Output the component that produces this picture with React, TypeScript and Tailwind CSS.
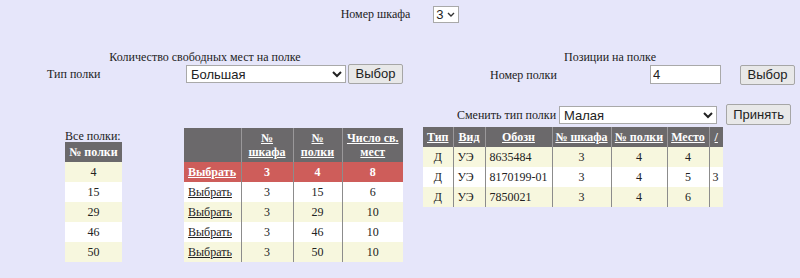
import React from "react";

const sans = { fontFamily: '"Liberation Sans", Arial, sans-serif' };

const freeRows = [
  { shelf: 4, free: 8, selected: true },
  { shelf: 15, free: 6 },
  { shelf: 29, free: 10 },
  { shelf: 46, free: 10 },
  { shelf: 50, free: 10 },
];

const positions = [
  { kind: "Д", type: "УЭ", code: "8635484", place: 4, extra: "" },
  { kind: "Д", type: "УЭ", code: "8170199-01", place: 5, extra: "3" },
  { kind: "Д", type: "УЭ", code: "7850021", place: 6, extra: "" },
];

function Button({ label, className }: { label: string; className: string }) {
  return (
    <button
      style={sans}
      className={`flex items-center justify-center rounded-[2px] border border-[#a6a6a6] bg-[#e8e8e8] text-[13px] text-[#222] ${className}`}
    >
      {label}
    </button>
  );
}

function rowBg(i: number) {
  return i % 2 === 0 ? "bg-[#f7f7de]" : "bg-white";
}

export default function App() {
  return (
    <div className="h-[278px] w-[800px] overflow-hidden bg-[#e6e6fa] font-['Liberation_Serif','Times_New_Roman','DejaVu_Serif',serif] text-[12px] text-[#222]">
      <div className="flex h-[22px] items-center justify-center gap-[23px] pt-[6px]">
        <span className="leading-[14px]">Номер шкафа</span>
        <div className="relative h-[17px] w-[26px]">
          <select
            style={sans}
            className="h-[17px] w-[26px] appearance-none border border-[#a9a9a9] bg-white py-0 pl-[2px] pr-0 text-[13px] leading-none"
            defaultValue="3"
          >
            <option value="3">3</option>
          </select>
          <svg
            className="pointer-events-none absolute right-[4px] top-[6px]"
            width="8"
            height="5"
            viewBox="0 0 8 5"
          >
            <path d="M1 1l3 3 3-3" fill="none" stroke="#333" strokeWidth="1.4" />
          </svg>
        </div>
      </div>

      <div className="mt-[28px] flex">
        {/* left half */}
        <div className="w-[420px]">
          <div className="w-[410px] text-center leading-[14px]">
            Количество свободных мест на полке
          </div>
          <div className="flex h-[20px] items-center">
            <span className="ml-[47px] w-[139px]">Тип полки</span>
            <select
              style={sans}
              className="h-[18px] w-[160px] border border-[#a9a9a9] bg-white text-[13px] leading-none"
              defaultValue="big"
            >
              <option value="big">Большая</option>
            </select>
            <Button label="Выбор" className="ml-[2px] h-[20px] w-[55px]" />
          </div>

          <div className="mt-[44px] flex items-start">
            <div className="ml-[65px] mt-[2px] w-[57px]">
              <div className="leading-[12px]">Все полки:</div>
              <table className="w-[57px] border-collapse">
                <thead>
                  <tr className="h-[20px] bg-[#6b696b] font-bold text-white">
                    <th className="p-0 text-center">№ полки</th>
                  </tr>
                </thead>
                <tbody>
                  {freeRows.map((r, i) => (
                    <tr key={r.shelf} className={`h-[20px] ${rowBg(i)}`}>
                      <td className="p-0 text-center">{r.shelf}</td>
                    </tr>
                  ))}
                </tbody>
              </table>
            </div>

            <table className="ml-[62px] w-[219px] table-fixed border-collapse">
              <colgroup>
                <col className="w-[57px]" />
                <col className="w-[52px]" />
                <col className="w-[49px]" />
                <col className="w-[61px]" />
              </colgroup>
              <thead>
                <tr className="h-[34px] bg-[#6b696b] font-bold leading-[14px] text-white">
                  <th className="p-0"></th>
                  <th className="border-l border-[#9a989a] p-0 text-center">
                    <span className="underline">№<br />шкафа</span>
                  </th>
                  <th className="border-l border-[#9a989a] p-0 text-center">
                    <span className="underline">№<br />полки</span>
                  </th>
                  <th className="border-l border-[#9a989a] p-0 text-center">
                    <span className="underline">Число св.<br />мест</span>
                  </th>
                </tr>
              </thead>
              <tbody>
                {freeRows.map((r, i) => (
                  <tr
                    key={r.shelf}
                    className={`h-[20px] ${
                      r.selected ? "bg-[#ce5d5a] font-bold text-white" : rowBg(i)
                    }`}
                  >
                    <td className="px-[4px] py-0 underline">Выбрать</td>
                    <td className="border-l border-[#8c8c8c] p-0 text-center">3</td>
                    <td className="border-l border-[#8c8c8c] p-0 text-center">{r.shelf}</td>
                    <td className="border-l border-[#8c8c8c] p-0 text-center">{r.free}</td>
                  </tr>
                ))}
              </tbody>
            </table>
          </div>
        </div>

        {/* right half */}
        <div className="w-[380px]">
          <div className="text-center leading-[14px]">Позиции на полке</div>
          <div className="flex h-[21px] items-center">
            <span className="ml-[70px] w-[160px]">Номер полки</span>
            <input
              style={sans}
              className="h-[19px] w-[71px] border border-[#a9a9a9] bg-white px-[2px] text-[13px]"
              defaultValue="4"
            />
            <Button label="Выбор" className="ml-[19px] h-[20px] w-[55px]" />
          </div>

          <div className="mt-[19px] flex h-[21px] items-center">
            <span className="ml-[37px]">Сменить тип полки</span>
            <select
              style={sans}
              className="ml-[3px] h-[18px] w-[158px] border border-[#a9a9a9] bg-white text-[13px] leading-none"
              defaultValue="small"
            >
              <option value="small">Малая</option>
            </select>
            <Button label="Принять" className="ml-[9px] h-[21px] w-[65px]" />
          </div>

          <div className="ml-[3px] mt-[2px] w-[300px] overflow-hidden">
            <table className="w-[300px] table-fixed border-collapse">
              <colgroup>
                <col className="w-[30px]" />
                <col className="w-[32px]" />
                <col className="w-[67px]" />
                <col className="w-[59px]" />
                <col className="w-[56px]" />
                <col className="w-[42px]" />
                <col className="w-[14px]" />
              </colgroup>
              <thead>
                <tr className="h-[20px] bg-[#6b696b] font-bold text-white">
                  {["Тип", "Вид", "Обозн", "№ шкафа", "№ полки", "Место", "/"].map(
                    (h, i) => (
                      <th
                        key={h}
                        className={`whitespace-nowrap p-0 text-center ${
                          i > 0 ? "border-l border-[#9a989a]" : ""
                        }`}
                      >
                        <span className="underline">{h}</span>
                      </th>
                    )
                  )}
                </tr>
              </thead>
              <tbody>
                {positions.map((p, i) => (
                  <tr key={p.code} className={`h-[20px] ${rowBg(i)}`}>
                    <td className="p-0 text-center">{p.kind}</td>
                    <td className="border-l border-[#8c8c8c] px-[4px] py-0">{p.type}</td>
                    <td className="border-l border-[#8c8c8c] px-[4px] py-0">{p.code}</td>
                    <td className="border-l border-[#8c8c8c] p-0 text-center">3</td>
                    <td className="border-l border-[#8c8c8c] p-0 text-center">4</td>
                    <td className="border-l border-[#8c8c8c] p-0 text-center">{p.place}</td>
                    <td className="border-l border-[#8c8c8c] px-[3px] py-0">{p.extra}</td>
                  </tr>
                ))}
              </tbody>
            </table>
          </div>
        </div>
      </div>
    </div>
  );
}
